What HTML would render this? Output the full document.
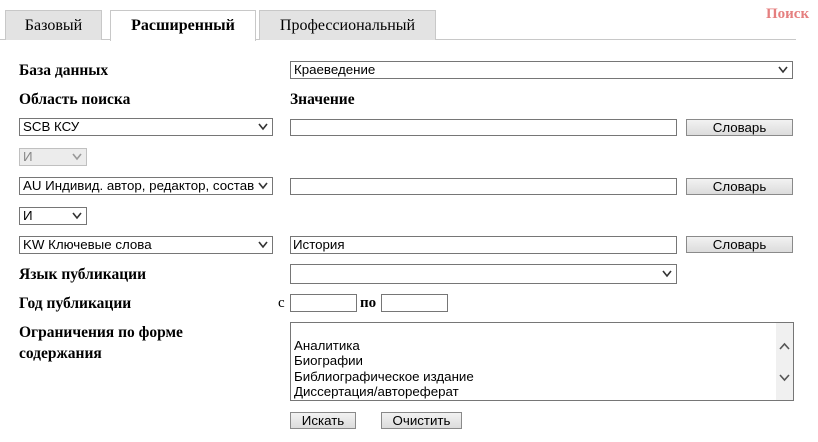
<!DOCTYPE html>
<html><head><meta charset="utf-8"><style>
body{margin:0;width:818px;height:442px;background:#fff;position:relative;overflow:hidden;font-family:"Liberation Sans",sans-serif;}
.a{position:absolute;box-sizing:border-box}
.tab{position:absolute;box-sizing:border-box;top:10px;height:30px;border:1px solid #c8c8c8;border-bottom:none;background:#e3e3e3;font:16px "Liberation Serif",serif;color:#000;text-align:center;line-height:30px}
.lbl{position:absolute;font:bold 15.5px "Liberation Serif",serif;color:#000}
.sel{position:absolute;box-sizing:border-box;border:1px solid #767676;background:#fff;font-size:13.3px;color:#000;padding-left:3px;line-height:15px;white-space:nowrap;overflow:hidden}
.sel svg{position:absolute;right:4px;top:4px}
.inp{position:absolute;box-sizing:border-box;border:1px solid #767676;background:#fff;font-size:13.3px;padding-left:2px;line-height:15px}
.btn{position:absolute;box-sizing:border-box;border:1px solid #8a8a8a;background:linear-gradient(#f2f2f2,#dcdcdc);font-size:13.3px;text-align:center;line-height:15px}
</style></head><body>
<div class="a" style="left:0;top:39px;width:796px;height:1px;background:#c8c8c8"></div>
<div class="tab" style="left:5px;width:97px">Базовый</div>
<div class="tab" style="left:110px;width:146px;height:31px;background:#fff;font-weight:bold">Расширенный</div>
<div class="tab" style="left:259px;width:177px">Профессиональный</div>
<div class="a" style="left:766px;top:6px;font:bold 15px 'Liberation Serif',serif;color:#e57f7f">Поиск</div>

<div class="lbl" style="left:19px;top:62px">База данных</div>
<div class="sel" style="left:290px;top:61px;width:503px;height:18px">Краеведение<svg width="10" height="8"><path d="M1 1l4 5 4-5" stroke="#333" stroke-width="1.6" fill="none"/></svg></div>
<div class="lbl" style="left:19px;top:91px">Область поиска</div>
<div class="lbl" style="left:290px;top:91px">Значение</div>

<div class="sel" style="left:19px;top:118px;width:254px;height:18px">SCB КСУ<svg width="10" height="8"><path d="M1 1l4 5 4-5" stroke="#333" stroke-width="1.6" fill="none"/></svg></div>
<div class="inp" style="left:290px;top:119px;width:387px;height:17px"></div>
<div class="btn" style="left:686px;top:119px;width:107px;height:17px">Словарь</div>

<div class="sel" style="left:19px;top:148px;width:68px;height:18px;border-color:#c0c0c0;background:#ececec;color:#888">И<svg width="10" height="8"><path d="M1 1l4 5 4-5" stroke="#999" stroke-width="1.6" fill="none"/></svg></div>

<div class="sel" style="left:19px;top:177px;width:254px;height:18px">AU Индивид. автор, редактор, составитель<div class="a" style="right:0;top:0;width:18px;height:16px;background:#fff"></div><svg width="10" height="8"><path d="M1 1l4 5 4-5" stroke="#333" stroke-width="1.6" fill="none"/></svg></div>
<div class="inp" style="left:290px;top:178px;width:387px;height:17px"></div>
<div class="btn" style="left:686px;top:178px;width:107px;height:17px">Словарь</div>

<div class="sel" style="left:19px;top:207px;width:68px;height:18px">И<svg width="10" height="8"><path d="M1 1l4 5 4-5" stroke="#333" stroke-width="1.6" fill="none"/></svg></div>

<div class="sel" style="left:19px;top:236px;width:254px;height:18px">KW Ключевые слова<svg width="10" height="8"><path d="M1 1l4 5 4-5" stroke="#333" stroke-width="1.6" fill="none"/></svg></div>
<div class="inp" style="left:290px;top:236px;width:387px;height:18px">История</div>
<div class="btn" style="left:686px;top:236px;width:107px;height:17px">Словарь</div>

<div class="lbl" style="left:19px;top:266px">Язык публикации</div>
<div class="sel" style="left:290px;top:264px;width:387px;height:20px"><svg width="10" height="8" style="top:5px"><path d="M1 1l4 5 4-5" stroke="#333" stroke-width="1.6" fill="none"/></svg></div>

<div class="lbl" style="left:19px;top:295px">Год публикации</div>
<div class="a" style="left:278px;top:295px;font:15px 'Liberation Serif',serif">с</div>
<div class="inp" style="left:290px;top:294px;width:67px;height:18px"></div>
<div class="a" style="left:360px;top:295px;font:bold 15px 'Liberation Serif',serif">по</div>
<div class="inp" style="left:381px;top:294px;width:67px;height:18px"></div>

<div class="lbl" style="left:19px;top:322px;line-height:21px">Ограничения по форме<br>содержания</div>
<div class="a" style="left:290px;top:322px;width:504px;height:79px;border:1px solid #767676;font-size:13.3px;line-height:15.3px;padding:15px 0 0 3px;overflow:hidden">Аналитика<br>Биографии<br>Библиографическое издание<br>Диссертация/автореферат
<div class="a" style="right:0;top:0;width:17px;height:77px;background:#f0f0f0">
<svg width="17" height="77"><path d="M4 26l4.5-5 4.5 5" stroke="#555" stroke-width="1.6" fill="none"/><path d="M4 52l4.5 5 4.5-5" stroke="#555" stroke-width="1.6" fill="none"/></svg></div></div>

<div class="btn" style="left:290px;top:412px;width:66px;height:17px">Искать</div>
<div class="btn" style="left:381px;top:412px;width:81px;height:17px">Очистить</div>
</body></html>
